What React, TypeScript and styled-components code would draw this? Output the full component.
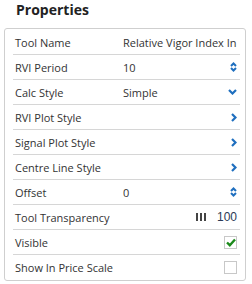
import * as React from 'react';
import styled, { createGlobalStyle } from 'styled-components';

const Colors = {
    TEXT: '#333333',
    BORDER: '#cfcfcf',
    LINE: '#d6d6d6',
    BLUE: '#1f6fbf',
    GREEN: '#1b8a1b',
};

const GlobalStyle = createGlobalStyle`
    body {
        margin: 0;
        background: #ffffff;
        font-family: "Open Sans", "Liberation Sans", sans-serif;
        color: ${Colors.TEXT};
    }
`;

type Kind = 'text' | 'spin' | 'select' | 'link' | 'slider' | 'check';

interface Prop {
    label: string;
    value?: string;
    kind: Kind;
    checked?: boolean;
}

const rows: Prop[] = [
    { label: 'Tool Name', value: 'Relative Vigor Index In', kind: 'text' },
    { label: 'RVI Period', value: '10', kind: 'spin' },
    { label: 'Calc Style', value: 'Simple', kind: 'select' },
    { label: 'RVI Plot Style', kind: 'link' },
    { label: 'Signal Plot Style', kind: 'link' },
    { label: 'Centre Line Style', kind: 'link' },
    { label: 'Offset', value: '0', kind: 'spin' },
    { label: 'Tool Transparency', value: '100', kind: 'slider' },
    { label: 'Visible', kind: 'check', checked: true },
    { label: 'Show In Price Scale', kind: 'check', checked: false },
];

const SpinIcon = () => (
    <svg width="7" height="10" viewBox="0 0 7 10">
        <path d="M1 4 L3.5 1.5 L6 4 M1 6 L3.5 8.5 L6 6" fill="none" stroke={Colors.BLUE} strokeWidth="2" />
    </svg>
);

const DownIcon = () => (
    <svg width="9" height="6" viewBox="0 0 9 6">
        <path d="M1 1 L4.5 4.5 L8 1" fill="none" stroke={Colors.BLUE} strokeWidth="2.2" />
    </svg>
);

const RightIcon = () => (
    <svg width="6" height="9" viewBox="0 0 6 9">
        <path d="M1 1 L4.5 4.5 L1 8" fill="none" stroke={Colors.BLUE} strokeWidth="2.2" />
    </svg>
);

const CheckMark = () => (
    <svg width="10" height="9" viewBox="0 0 10 9">
        <path d="M1 4.5 L3.8 7.2 L9 1.5" fill="none" stroke={Colors.GREEN} strokeWidth="2.4" />
    </svg>
);

const Control: React.FC<{ row: Prop }> = ({ row }) => {
    switch (row.kind) {
        case 'spin':
            return <SpinIcon />;
        case 'select':
            return <DownIcon />;
        case 'link':
            return <RightIcon />;
        case 'slider':
            return (
                <SliderValue>
                    <Bars>
                        <Bar />
                        <Bar />
                        <Bar />
                    </Bars>
                    <Number>{row.value}</Number>
                </SliderValue>
            );
        case 'check':
            return <CheckBox>{row.checked && <CheckMark />}</CheckBox>;
        default:
            return null;
    }
};

const App: React.FC = () => {
    return (
        <Wrapper>
            <GlobalStyle />
            <Title>Properties</Title>
            <Panel>
                {rows.map((row) => (
                    <Row key={row.label}>
                        <Label>{row.label}</Label>
                        <Value>{row.kind !== 'slider' ? row.value : ''}</Value>
                        <Control row={row} />
                    </Row>
                ))}
            </Panel>
        </Wrapper>
    );
};

const Wrapper = styled.div`
    width: 252px;
    height: 284px;
    padding: 0 0 0 4px;
    box-sizing: border-box;
`;
const Title = styled.div`
    font-size: 14px;
    font-weight: 700;
    line-height: 20px;
    padding-left: 12px;
    color: #222;
`;
const Panel = styled.div`
    margin-top: 8px;
    width: 242px;
    height: 253px;
    box-sizing: border-box;
    border: 1px solid ${Colors.BORDER};
    border-radius: 3px;
    padding: 1px 5px 1px 8px;
`;
const Row = styled.div`
    display: grid;
    grid-template-columns: 108px 1fr auto;
    align-items: center;
    height: 24px;
    padding: 0 3px 0 2px;
    border-bottom: 1px solid ${Colors.LINE};
    font-size: 11px;
    &:last-child {
        border-bottom: none;
    }
`;
const Label = styled.div`
    white-space: nowrap;
`;
const Value = styled.div`
    white-space: nowrap;
    overflow: hidden;
`;
const SliderValue = styled.div`
    display: flex;
    align-items: center;
    gap: 11px;
`;
const Bars = styled.div`
    display: flex;
    gap: 2px;
`;
const Bar = styled.div`
    width: 2px;
    height: 8px;
    background-color: #444;
`;
const Number = styled.span`
    font-family: "Liberation Sans", Arial, sans-serif;
    font-size: 12px;
    color: #2b3a55;
`;
const CheckBox = styled.div`
    width: 11px;
    height: 11px;
    border: 1px solid #c8c8c8;
    background: #fff;
    display: flex;
    align-items: center;
    justify-content: center;
`;

export default App;
